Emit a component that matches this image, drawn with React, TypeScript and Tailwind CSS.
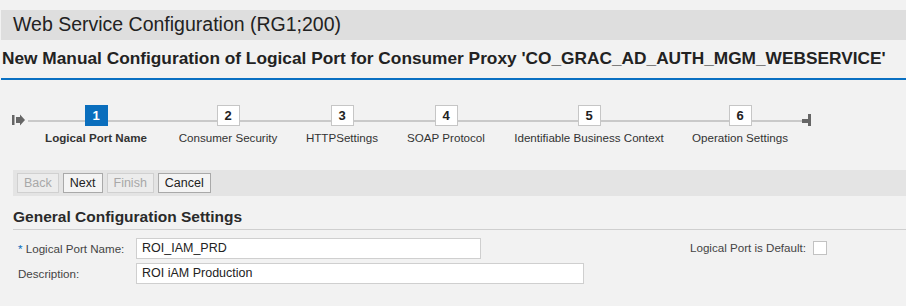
import React from 'react';

const steps = [
    { n: 1, label: 'Logical Port Name', x: 96 },
    { n: 2, label: 'Consumer Security', x: 228 },
    { n: 3, label: 'HTTPSettings', x: 342 },
    { n: 4, label: 'SOAP Protocol', x: 446 },
    { n: 5, label: 'Identifiable Business Context', x: 589 },
    { n: 6, label: 'Operation Settings', x: 740 },
];

function Roadmap() {
    return (
        <div className="relative h-[60px] mt-[25px]">
            {/* start marker */}
            <svg className="absolute left-[12px] top-[9px]" width="14" height="12" viewBox="0 0 14 12">
                <rect x="0" y="1" width="2.5" height="10" fill="#666" />
                <path d="M4 3 H8 V0.5 L13 6 L8 11.5 V9 H4 Z" fill="#666" />
            </svg>
            {/* track */}
            <div className="absolute left-[28px] w-[775px] top-[15px] h-[2px] bg-[#c9c9c9]" />
            {/* end marker */}
            <div className="absolute left-[802px] top-[14px] w-[8px] h-[4px] bg-[#666]" />
            <div className="absolute left-[808px] top-[9px] w-[3px] h-[12px] bg-[#666]" />
            {steps.map((s) => (
                <div key={s.n} className="absolute top-0 flex flex-col items-center w-[200px]" style={{ left: s.x - 100 }}>
                    <div
                        className={
                            s.n === 1
                                ? 'w-[23px] h-[21px] flex items-center justify-center bg-[#0a6ebd] text-white text-[13px] font-bold'
                                : 'w-[23px] h-[21px] flex items-center justify-center bg-white border border-[#c6c6c6] text-[#222] text-[13px] font-bold'
                        }
                    >
                        {s.n}
                    </div>
                    <div className={s.n === 1 ? 'mt-[3px] text-[11.6px] font-bold text-[#333] whitespace-nowrap' : 'mt-[3px] text-[11.6px] text-[#333] whitespace-nowrap'}>
                        {s.label}
                    </div>
                </div>
            ))}
        </div>
    );
}

function Btn({ children, disabled }: { children: React.ReactNode; disabled?: boolean }) {
    return (
        <button
            className={
                disabled
                    ? 'h-[20px] px-[6px] border border-[#d0d0d0] bg-[#ececec] text-[#a8a8a8] text-[12.5px] leading-none'
                    : 'h-[20px] px-[6px] border border-[#a9a9a9] bg-[#f4f4f4] text-[#222] text-[12.5px] leading-none'
            }
        >
            {children}
        </button>
    );
}

export default function App() {
    return (
        <div className="w-[906px] h-[306px] bg-[#f2f2f2] overflow-hidden pt-[10px] text-[#333]" style={{ fontFamily: '"Liberation Sans", Arial, sans-serif' }}>
            <div className="ml-[1px] h-[30px] bg-[#dedede] flex items-center pl-[12px]">
                <span className="text-[19.5px] text-[#222]">Web Service Configuration (RG1;200)</span>
            </div>
            <div className="pl-[2px] h-[38px] flex items-center text-[17.3px] font-bold text-[#222] whitespace-nowrap">
                New Manual Configuration of Logical Port for Consumer Proxy 'CO_GRAC_AD_AUTH_MGM_WEBSERVICE'
            </div>
            <div className="ml-[1px] h-[2px] bg-[#0a70c2]" />

            <Roadmap />

            <div className="ml-[13px] mt-[5px] h-[26px] bg-[#e4e4e4] flex items-center gap-[4px] pl-[4px]">
                <Btn disabled>Back</Btn>
                <Btn>Next</Btn>
                <Btn disabled>Finish</Btn>
                <Btn>Cancel</Btn>
            </div>

            <div className="ml-[13px] mt-[11px] h-[23px] border-b border-[#cfcfcf] text-[15.5px] font-bold text-[#2a2a2a] leading-[20px]">
                General Configuration Settings
            </div>

            <div className="mt-[8px] ml-[18px] flex flex-col gap-[4px] text-[11.6px] text-[#444]">
                <div className="flex items-center h-[21px]">
                    <div className="w-[118px]"><span className="text-[#0a6ebd]">*</span> Logical Port Name:</div>
                    <div className="w-[345px] h-[21px] bg-white border border-[#cfcfcf] flex items-center px-[5px] text-[12.5px] text-[#222]">ROI_IAM_PRD</div>
                    <div className="ml-auto mr-[79px] flex items-center gap-[7px] self-start mt-[1px]">
                        <span>Logical Port is Default:</span>
                        <div className="w-[14px] h-[14px] bg-white border border-[#c2c2c2]" />
                    </div>
                </div>
                <div className="flex items-center h-[21px]">
                    <div className="w-[118px]">Description:</div>
                    <div className="w-[448px] h-[21px] bg-white border border-[#cfcfcf] flex items-center px-[5px] text-[12.5px] text-[#222]">ROI iAM Production</div>
                </div>
            </div>
        </div>
    );
}
